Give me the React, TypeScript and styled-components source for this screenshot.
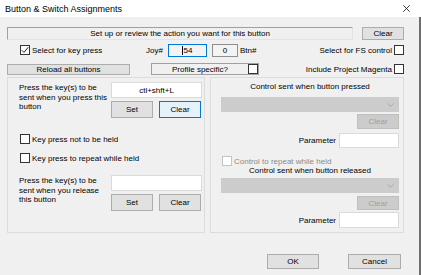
import React from 'react';
import styled, { createGlobalStyle, css } from 'styled-components';

const Global = createGlobalStyle`
  html, body { margin: 0; padding: 0; background: #f0f0f0; }
  body { font-family: "Liberation Sans", Arial, sans-serif; font-size: 8px; color: #000; }
  #root { width: 421px; height: 275px; overflow: hidden; }
  * { box-sizing: border-box; }
`;

const Window = styled.div`
  width: 421px;
  height: 275px;
  display: flex;
  flex-direction: column;
  background: #f0f0f0;
`;

const TitleBar = styled.div`
  height: 17px;
  flex: none;
  display: flex;
  align-items: center;
  padding-left: 5px;
  background: #fff;
  font-size: 9px;
  color: #000;
`;

const CloseBox = styled.span`
  margin-left: auto;
  margin-right: 11px;
  display: flex;
`;

const Body = styled.div`
  flex: 1;
  display: flex;
  flex-direction: column;
  padding: 0 15px 0 7px;
  border-right: 2px solid #6e6e6e;
`;

const Row = styled.div<{ $top: number; $h: number }>`
  display: flex;
  align-items: center;
  margin-top: ${(p) => p.$top}px;
  height: ${(p) => p.$h}px;
  flex: none;
`;

const Sunken = styled.div<{ $w: number }>`
  width: ${(p) => p.$w}px;
  height: 100%;
  display: flex;
  align-items: center;
  justify-content: center;
  border: 1px solid #a0a0a0;
  border-right-color: #e3e3e3;
  border-bottom-color: #e3e3e3;
  background: #f0f0f0;
  white-space: nowrap;
`;

const Btn = styled.div<{ $w: number; $h: number; $ml?: number; $mt?: number; $focus?: boolean; $disabled?: boolean }>`
  width: ${(p) => p.$w}px;
  height: ${(p) => p.$h}px;
  margin-left: ${(p) => p.$ml ?? 0}px;
  margin-top: ${(p) => p.$mt ?? 0}px;
  flex: none;
  display: flex;
  align-items: center;
  justify-content: center;
  background: #e1e1e1;
  border: 1px solid #adadad;
  white-space: nowrap;
  ${(p) =>
    p.$focus &&
    css`
      background: #e5f1fb;
      border-color: #0078d7;
    `}
  ${(p) =>
    p.$disabled &&
    css`
      background: #cccccc;
      border-color: #bfbfbf;
      color: #a0a0a0;
    `}
`;

const Box = styled.span<{ $disabled?: boolean }>`
  width: 10px;
  height: 10px;
  flex: none;
  display: inline-flex;
  align-items: center;
  justify-content: center;
  background: #fff;
  border: 1px solid ${(p) => (p.$disabled ? '#c4c4c4' : '#333')};
`;

const CheckLabel = styled.label<{ $ml?: number; $disabled?: boolean }>`
  display: flex;
  align-items: center;
  gap: 2px;
  margin-left: ${(p) => p.$ml ?? 0}px;
  white-space: nowrap;
  color: ${(p) => (p.$disabled ? '#8a8a8a' : '#000')};
`;

const KeyCell = styled.div`
  width: 139px;
  padding-left: 13px;
  display: flex;
  align-items: center;
`;

const Caption = styled.span<{ $ml?: number; $mr?: number }>`
  margin-left: ${(p) => p.$ml ?? 0}px;
  margin-right: ${(p) => p.$mr ?? 0}px;
  white-space: nowrap;
`;

const Field = styled.div<{ $w: number; $h: number; $ml?: number; $focus?: boolean; $light?: boolean }>`
  width: ${(p) => p.$w}px;
  height: ${(p) => p.$h}px;
  margin-left: ${(p) => p.$ml ?? 0}px;
  flex: none;
  display: flex;
  align-items: center;
  justify-content: center;
  background: ${(p) => (p.$light ? '#fff' : '#f3f3f3')};
  border: 1px solid ${(p) => (p.$focus ? '#0078d7' : p.$light ? '#dadada' : '#8f8f8f')};
  white-space: nowrap;
`;

const Caret = styled.span`
  border-left: 1px solid #000;
  padding-left: 0;
`;

const RightSide = styled.div`
  margin-left: auto;
  display: flex;
  align-items: center;
`;

const ProfileBox = styled(Sunken)`
  margin-left: 21px;
  justify-content: space-between;
  padding-left: 0;
  border-color: #a0a0a0;
`;

const ProfileText = styled.span`
  flex: 1;
  text-align: center;
`;

const Groups = styled.div`
  display: flex;
  gap: 5px;
  height: 156px;
  margin-top: 2px;
  flex: none;
`;

const Group = styled.div<{ $pl: number; $pr: number }>`
  width: 198px;
  height: 100%;
  border: 1px solid #dcdcdc;
  padding: 4px ${(p) => p.$pr}px 0 ${(p) => p.$pl}px;
  display: flex;
  flex-direction: column;
`;

const Section = styled.div<{ $mt?: number }>`
  display: flex;
  margin-top: ${(p) => p.$mt ?? 0}px;
`;

const Prompt = styled.div`
  width: 93px;
  line-height: 9.5px;
  padding-top: 1px;
`;

const Controls = styled.div`
  width: 91px;
  display: flex;
  flex-direction: column;
`;

const BtnRow = styled.div`
  display: flex;
  margin-top: 3px;
`;

const CheckRow = styled.div<{ $mt: number }>`
  display: flex;
  margin-top: ${(p) => p.$mt}px;
  height: 10px;
  align-items: center;
`;

const GroupTitle = styled.div<{ $mt?: number }>`
  text-align: center;
  line-height: 10px;
  height: 10px;
  margin-top: ${(p) => p.$mt ?? 0}px;
`;

const Combo = styled.div<{ $mt: number }>`
  height: 15px;
  margin-top: ${(p) => p.$mt}px;
  background: #cccccc;
  border: 1px solid #cccccc;
  display: flex;
  align-items: center;
  justify-content: flex-end;
  padding-right: 4px;
`;

const EndRow = styled.div<{ $mt: number; $h: number }>`
  display: flex;
  justify-content: flex-end;
  align-items: center;
  margin-top: ${(p) => p.$mt}px;
  height: ${(p) => p.$h}px;
`;

const Footer = styled.div`
  display: flex;
  justify-content: flex-end;
  margin-top: 21px;
  padding-right: 3px;
`;

const Check = () => (
  <svg width="8" height="8" viewBox="0 0 8 8">
    <path d="M0.8 4.2 L3 6.4 L7.3 1.2" fill="none" stroke="#222" strokeWidth="1" />
  </svg>
);

const Chevron = () => (
  <svg width="7" height="4" viewBox="0 0 7 4">
    <path d="M0.5 0.5 L3.5 3.3 L6.5 0.5" fill="none" stroke="#a6a6a6" strokeWidth="0.9" />
  </svg>
);

const CloseIcon = () => (
  <svg width="7" height="7" viewBox="0 0 7 7">
    <path d="M0.3 0.3 L6.7 6.7 M6.7 0.3 L0.3 6.7" stroke="#111" strokeWidth="0.8" />
  </svg>
);

const KeySection = ({ mt, lines, value }: { mt?: number; lines: string[]; value: string }) => (
  <Section $mt={mt}>
    <Prompt>
      {lines.map((l) => (
        <div key={l}>{l}</div>
      ))}
    </Prompt>
    <Controls>
      <Field $w={91} $h={16} $light>
        {value}
      </Field>
      <BtnRow>
        <Btn $w={42} $h={17}>Set</Btn>
        <Btn $w={42} $h={17} $ml={6} $focus={!!value}>
          Clear
        </Btn>
      </BtnRow>
    </Controls>
  </Section>
);

const ControlBlock = ({ title, mt, comboMt, clearMt, clearH, paramMt, paramH }: {
  title: string; mt?: number; comboMt: number; clearMt: number; clearH: number; paramMt: number; paramH: number;
}) => (
  <>
    <GroupTitle $mt={mt}>{title}</GroupTitle>
    <Combo $mt={comboMt}>
      <Chevron />
    </Combo>
    <EndRow $mt={clearMt} $h={clearH}>
      <Btn $w={42} $h={clearH} $disabled>
        Clear
      </Btn>
    </EndRow>
    <EndRow $mt={paramMt} $h={paramH}>
      <Caption $mr={3}>Parameter</Caption>
      <Field $w={60} $h={paramH} $light />
    </EndRow>
  </>
);

export default function App() {
  return (
    <>
      <Global />
      <Window>
        <TitleBar>
          Button &amp; Switch Assignments
          <CloseBox>
            <CloseIcon />
          </CloseBox>
        </TitleBar>
        <Body>
          <Row $top={10} $h={13}>
            <Sunken $w={346}>Set up or review the action you want for this button</Sunken>
            <Btn $w={42} $h={13} $ml={9}>Clear</Btn>
          </Row>
          <Row $top={3} $h={14}>
            <KeyCell>
              <CheckLabel>
                <Box>
                  <Check />
                </Box>
                Select for key press
              </CheckLabel>
            </KeyCell>
            <Caption>Joy#</Caption>
            <Field $w={39} $h={13} $ml={5} $focus>
              <Caret>54</Caret>
            </Field>
            <Field $w={26} $h={13} $ml={5}>0</Field>
            <Caption $ml={2}>Btn#</Caption>
            <RightSide>
              <CheckLabel>
                Select for FS control
                <Box />
              </CheckLabel>
            </RightSide>
          </Row>
          <Row $top={6} $h={12}>
            <Btn $w={123} $h={11}>Reload all buttons</Btn>
            <ProfileBox $w={108}>
              <ProfileText>Profile specific?</ProfileText>
              <Box />
            </ProfileBox>
            <RightSide>
              <CheckLabel>
                Include Project Magenta
                <Box />
              </CheckLabel>
            </RightSide>
          </Row>
          <Groups>
            <Group $pl={11} $pr={2}>
              <KeySection
                lines={['Press the key(s) to be', 'sent when you press this', 'button']}
                value="ctl+shft+L"
              />
              <CheckRow $mt={16}>
                <CheckLabel $ml={1}>
                  <Box />
                  Key press not to be held
                </CheckLabel>
              </CheckRow>
              <CheckRow $mt={9}>
                <CheckLabel $ml={1}>
                  <Box />
                  Key press to repeat while held
                </CheckLabel>
              </CheckRow>
              <KeySection
                mt={12}
                lines={['Press the key(s) to be', 'sent when you release', 'this button']}
                value=""
              />
            </Group>
            <Group $pl={10} $pr={4}>
              <ControlBlock
                title="Control sent when button pressed"
                comboMt={5}
                clearMt={2}
                clearH={15}
                paramMt={4}
                paramH={15}
              />
              <CheckRow $mt={8}>
                <CheckLabel $ml={1} $disabled>
                  <Box $disabled />
                  Control to repeat while held
                </CheckLabel>
              </CheckRow>
              <ControlBlock
                title="Control sent when button released"
                mt={0}
                comboMt={2}
                clearMt={3}
                clearH={14}
                paramMt={2}
                paramH={16}
              />
            </Group>
          </Groups>
          <Footer>
            <Btn $w={52} $h={15}>OK</Btn>
            <Btn $w={53} $h={15} $ml={29}>Cancel</Btn>
          </Footer>
        </Body>
      </Window>
    </>
  );
}
